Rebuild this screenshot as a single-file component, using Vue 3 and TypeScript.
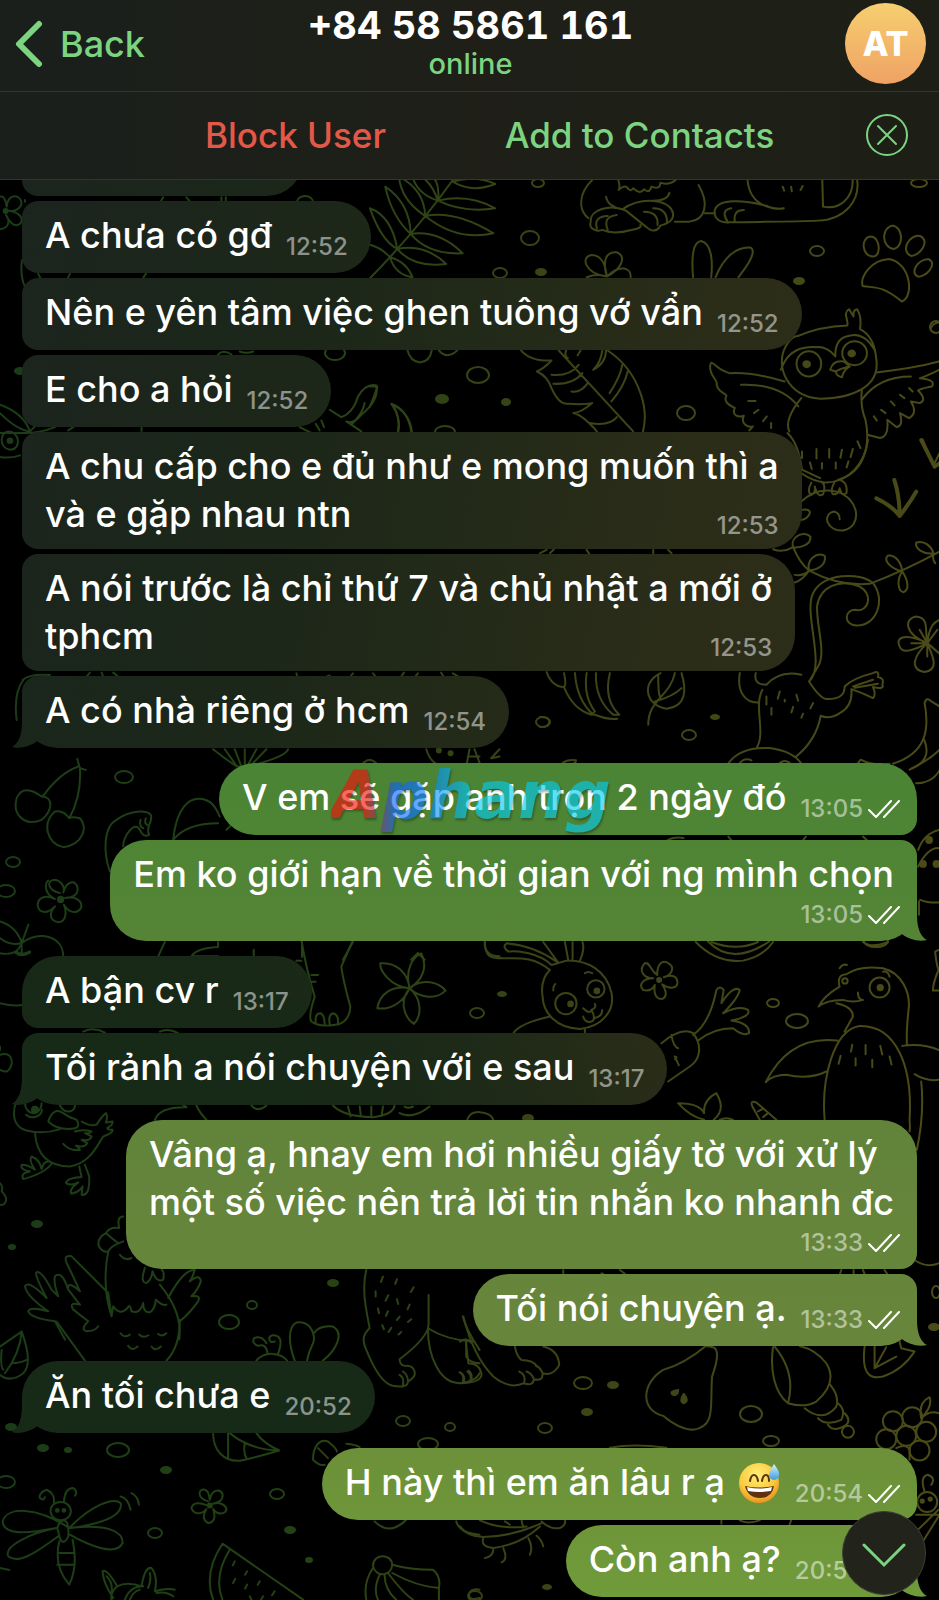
<script setup lang="ts">
interface Message {
  id: number
  lines: string[]
  time: string
  out?: boolean
  stacked?: boolean
  emoji?: boolean
}

const groups: Message[][] = [
  [
    { id: 1, lines: ['A chưa có gđ'], time: '12:52' },
    { id: 2, lines: ['Nên e yên tâm việc ghen tuông vớ vẩn'], time: '12:52' },
    { id: 3, lines: ['E cho a hỏi'], time: '12:52' },
    { id: 4, lines: ['A chu cấp cho e đủ như e mong muốn thì a', 'và e gặp nhau ntn'], time: '12:53' },
    { id: 5, lines: ['A nói trước là chỉ thứ 7 và chủ nhật a mới ở', 'tphcm'], time: '12:53' },
    { id: 6, lines: ['A có nhà riêng ở hcm'], time: '12:54' },
  ],
  [
    { id: 7, lines: ['V em sẽ gặp anh trọn 2 ngày đó'], time: '13:05', out: true },
    { id: 8, lines: ['Em ko giới hạn về thời gian với ng mình chọn'], time: '13:05', out: true, stacked: true },
  ],
  [
    { id: 9, lines: ['A bận cv r'], time: '13:17' },
    { id: 10, lines: ['Tối rảnh a nói chuyện với e sau'], time: '13:17' },
  ],
  [
    {
      id: 11,
      lines: ['Vâng ạ, hnay em hơi nhiều giấy tờ với xử lý', 'một số việc nên trả lời tin nhắn ko nhanh đc'],
      time: '13:33',
      out: true,
      stacked: true,
    },
    { id: 12, lines: ['Tối nói chuyện ạ.'], time: '13:33', out: true },
  ],
  [{ id: 13, lines: ['Ăn tối chưa e'], time: '20:52' }],
  [
    { id: 14, lines: ['H này thì em ăn lâu r ạ'], time: '20:54', out: true, emoji: true },
    { id: 15, lines: ['Còn anh ạ?'], time: '20:54', out: true },
  ],
]

// Wallpaper pebbles: [cx, cy, rx, ry]
const rings: number[][] = [
  [530, 238, 9, 7], [500, 273, 7, 5], [817, 251, 7, 5], [335, 353, 10, 7], [478, 375, 11, 8],
  [686, 413, 9, 7], [936, 327, 6, 6], [445, 432, 10, 6], [305, 202, 8, 6], [543, 722, 7, 5],
  [689, 735, 7, 5], [124, 777, 9, 6], [13, 862, 7, 5], [6, 891, 9, 6], [477, 1013, 7, 5],
  [773, 1003, 6, 4], [797, 1021, 11, 7], [876, 941, 12, 6], [252, 1305, 5, 4], [229, 1322, 10, 7],
  [403, 1421, 7, 5], [450, 1427, 5, 4], [428, 1444, 10, 6], [118, 1450, 11, 7], [6, 1482, 9, 6],
  [277, 1494, 7, 5], [155, 1533, 7, 5], [583, 1383, 9, 6], [545, 1428, 7, 5], [751, 1414, 11, 8],
  [771, 1441, 8, 5], [475, 1596, 7, 5], [936, 1292, 4, 6], [538, 183, 6, 4], [919, 183, 8, 4],
]
const dots: number[][] = [
  [541, 272, 6, 4], [799, 281, 6, 4], [442, 399, 7, 5], [506, 402, 5, 4], [715, 717, 5, 3],
  [20, 371, 6, 4], [502, 994, 5, 3], [528, 1118, 6, 4], [37, 1224, 6, 4], [12, 1247, 4, 3],
  [333, 1283, 6, 4], [11, 1427, 6, 4], [43, 1448, 6, 4], [68, 1450, 4, 3], [166, 1470, 6, 4],
  [290, 1530, 6, 4], [309, 1560, 4, 3], [613, 1385, 6, 4], [587, 1412, 6, 4], [547, 1587, 5, 3],
  [934, 1327, 6, 4],
]

const isLast = (index: number, list: unknown[]) => index === list.length - 1
</script>

<template>
  <div class="screen">
    <svg class="wallpaper" viewBox="0 0 939 1600" preserveAspectRatio="xMidYMin slice" aria-hidden="true">
      <defs>
        <linearGradient id="inkAcross" x1="0" y1="0" x2="1" y2="0">
          <stop offset="0" stop-color="#1a3c17" />
          <stop offset="0.3" stop-color="#234213" />
          <stop offset="0.6" stop-color="#3c4416" />
          <stop offset="1" stop-color="#4b4b18" />
        </linearGradient>
        <mask id="doodles" maskUnits="userSpaceOnUse" x="0" y="0" width="939" height="1600">
          <ellipse v-for="(r, i) in rings" :key="'r' + i" class="line" :cx="r[0]" :cy="r[1]" :rx="r[2]" :ry="r[3]" />
          <ellipse v-for="(d, i) in dots" :key="'d' + i" fill="#fff" :cx="d[0]" :cy="d[1]" :rx="d[2]" :ry="d[3]" />

          <!-- fern, sleeping pets, paw, feather and owl -->
          <g class="line" transform="translate(370 180) scale(.363 .333)">
            <path d="M228 0Q130 150 0 295M187 62Q125 40 115-20Q165-10 187 62ZM187 62Q195 0 160-20M187 62Q270 40 345 85Q260 100 187 62M228 5Q290-15 345 12Q280 40 228 5M152 108Q85 60 80-10Q150 30 152 108M152 108Q235 90 340 160Q240 185 152 108M112 162Q60 110 42 20Q110 70 112 162M112 162Q190 150 255 220Q160 225 112 162M75 207Q30 180 0 85Q60 110 75 207M75 207Q150 190 210 252Q120 265 75 207M55 232Q30 200-10 192M55 232Q100 245 117 292Q70 285 55 232" />
            <path d="M612 0C575 40 572 90 602 115M684 0Q690 20 685 30Q700 15 708 22Q718 38 725 25Q745 45 755 28Q770 42 775 20Q800 30 800 8Q830 20 850-10M650 50Q655 80 695 88M825 38Q820 62 780 62M695 88Q740 55 795 65C845 80 850 125 800 137Q785 165 760 140L705 92C660 70 605 90 608 125C600 150 630 155 640 150Q670 165 720 150Q750 145 745 135M655 150Q640 110 680 105M625 145Q615 110 655 108M755 95Q795 95 792 135M780 85Q820 85 818 130M905 15C935 70 925 120 880 125L840 125M922 100H950" />
            <path d="M1040 0Q1045 60 1090 78Q1120 90 1140 85M1095 78C1030 60 960 55 950 90C945 120 970 130 990 127C1120 125 1180 125 1235 122C1310 118 1350 60 1342 0M1330 0C1330 60 1290 90 1248 80L1246 0M985 125Q965 90 995 85M1005 125Q1000 90 1030 90M1137 20l4 12M1160 20l2 14M1192 18l-6 12" />
            <path d="M1380 170c25 0 30 60 5 60c-30-2-35-58-5-60M1440 137c30 5 30 65 3 70c-35-5-35-65-3-70M1515 168c30 15 0 60-25 60c-30-15-5-65 25-60M1540 238c25 15-10 55-30 52c-25-10 0-55 30-52M1430 237C1380 240 1350 290 1357 318C1390 325 1410 315 1465 365C1500 350 1490 250 1430 237" />
            <path d="M652 290C590 280 580 230 610 225C640 225 650 260 652 290C640 240 650 215 680 217C710 230 690 270 652 290C690 250 720 265 718 292M597 292Q625 280 652 290M890 292C885 230 890 185 912 183C940 190 945 240 940 292M952 292C975 230 1010 200 1048 203C1070 215 1030 270 1015 292" />
            <path d="M103 510Q110 545 138 548Q165 545 170 512M190 512Q212 540 240 512M415 510Q440 545 500 542Q480 565 460 575Q490 590 500 625Q520 675 545 672Q590 675 612 670Q580 700 560 700Q585 705 625 755M520 512L725 755M655 512Q720 560 745 640Q765 700 752 755M580 512l-8 14M540 512Q535 530 545 535M640 512Q635 550 615 570Q650 550 650 512M500 585Q550 590 575 555M505 612Q560 615 585 580M555 635Q580 640 600 610M660 640Q690 590 695 555M665 665Q700 620 710 575M605 730Q660 740 680 712M63 675Q110 700 115 755M0 680Q15 640 20 620L0 620M78 755Q85 720 63 675" />
            <path d="M1180 468Q1240 440 1315 437C1320 420 1300 400 1320 388L1332 410Q1330 390 1342 388Q1355 410 1350 448Q1390 470 1395 540C1405 620 1330 655 1240 657C1150 650 1115 560 1145 500Q1160 470 1180 468M1132 570C1150 510 1190 500 1230 502Q1260 500 1282 530Q1280 475 1320 468Q1360 455 1390 510" />
            <ellipse cx="1209" cy="552" rx="34" ry="38" /><ellipse cx="1335" cy="520" rx="34" ry="36" />
            <circle cx="1203" cy="553" r="9" fill="#fff" /><circle cx="1327" cy="521" r="9" fill="#fff" />
            <path d="M1268 570Q1275 540 1305 545L1322 560Q1305 570 1300 592Q1285 590 1283 575ZM1283 575Q1300 565 1320 560M1142 605Q1050 575 990 580C950 570 940 530 937 560C935 590 960 600 955 615C960 640 980 640 982 648C970 670 1000 680 1005 685C995 705 1015 715 1030 708C1020 730 1040 745 1055 740L1045 752M1022 615Q1130 610 1180 680M1188 655Q1140 720 1155 755M1395 578Q1500 565 1568 545M1355 660Q1400 590 1490 590M1568 570Q1530 590 1515 595Q1560 600 1548 620Q1520 625 1510 632Q1535 660 1515 670L1490 665Q1510 700 1485 715L1460 700Q1470 740 1450 742L1425 720Q1430 770 1405 775L1370 765M1355 630Q1350 680 1365 720C1380 800 1360 880 1290 900M1042 664h20M1070 690l-12 10M1093 710l-10 14M1105 730v15M1435 665l10 12M1460 645l12 10M1408 690l12 10M1388 710l8 12M1485 625l10 10" />
            <path d="M1190 815v20M1230 808v28M1265 808v26M1300 810l-4 24M1330 808l-6 24M1343 785l8 20M1212 848l5 20M1245 850v16M1283 848v18M1318 845l-5 18M1150 760Q1180 790 1190 870L1240 895M1523 780Q1540 830 1552 858L1568 822M1545 445q5-15 25-18" />
          </g>

          <!-- owl feet, vine, monkey, bananas -->
          <g class="line" transform="translate(540 440) scale(.333)">
            <path d="M785 100Q820 125 860 128C930 125 975 70 985 0M815 128Q800 155 815 165Q830 155 825 140Q835 175 850 163Q860 135 845 125M885 125Q870 155 880 163Q895 165 900 145Q905 170 920 160Q925 130 905 122M782 187Q830 140 890 155C960 175 970 260 910 272C860 275 845 220 885 215Q900 220 900 238M783 210q35-5 25 15q-10 15-25 15" />
            <path class="thick" d="M1010 175Q1060 200 1080 228Q1110 190 1130 155M1064 120Q1080 170 1080 228M1145 0L1185 80L1200 70" />
            <path d="M700 328Q730 340 760 322C750 290 795 270 812 290C815 315 780 325 760 322Q780 370 808 392C800 360 830 335 855 348C860 375 835 390 808 392Q790 410 765 405M765 428Q790 420 808 392Q900 440 990 432Q1100 390 1200 335M1088 395C1050 385 1030 360 1045 347C1070 345 1085 370 1088 395C1070 420 1075 455 1092 457C1110 450 1105 420 1088 395M1182 340C1150 345 1125 325 1130 308C1155 300 1175 320 1182 340q-5 20 5 30" />
            <path d="M808 725C860 680 790 520 820 460C850 400 960 395 1000 430C1040 480 1010 560 950 557C910 555 915 510 945 510C990 520 1000 460 960 440C900 415 840 440 832 500C830 560 860 640 835 680L808 725Q840 775 860 778Q915 780 915 740Q940 715 1000 700Q1020 690 1015 712Q1035 715 1028 735Q1035 750 1000 742Q1010 765 1000 775Q970 760 935 748Q940 800 900 820Q870 840 843 828Q830 900 770 950M940 740l60-20M945 744l70-12M785 705Q720 690 680 735Q640 735 648 700M600 700C590 760 620 790 655 788M668 750C640 800 680 880 650 925M565 972Q600 920 690 925Q760 935 785 972M600 970q15-18 35-8M720 970q15-12 30 0M680 770v24M720 755l-6 22M770 765l5 18M820 790l-8 16M695 805v20M760 802l-5 16M790 822l-5 12M735 780v5" />
            <path d="M20 697Q35 740 72 742Q80 735 72 700M105 700Q110 780 160 825M72 742Q100 810 155 825L165 815Q130 770 140 700M168 700Q165 780 220 825L238 825Q190 780 210 700M165 825Q200 840 232 837M0 832q30 0 28 16q-5 16-28 14M0 340l20-10M30 340l12-12M340 330v12M385 330l10 10M140 330l8 12" />
            <path d="M325 855C325 780 390 770 405 700M362 700C300 730 320 800 380 807C440 800 440 750 425 700M355 705Q355 760 360 770M345 785Q400 770 425 745" />
            <path d="M1163 610Q1090 650 1080 620C1065 590 1100 580 1163 610C1090 580 1095 535 1130 530C1170 535 1155 570 1163 610C1170 550 1190 545 1200 540M1163 610C1120 650 1110 690 1155 697C1200 690 1180 650 1163 610L1140 570M1163 610H1115M1163 610V650M1163 610l30-40M1163 610l35 30" />
            <path d="M1155 790C1170 870 1160 940 1060 972M1155 790Q1160 770 1175 785L1200 800M1110 990Q1170 960 1200 930M955 970l8-10Q1000 980 1050 972M68 970q15-12 40-8q0 10-10 10" />
          </g>

          <!-- cherries, swan, flower, apple -->
          <g class="line" transform="translate(0 660) scale(.333)">
            <path d="M125 410Q70 370 50 415C35 470 80 500 125 480C160 450 160 410 125 410L132 405Q180 340 235 320M232 297L240 325L258 330M240 325Q245 410 208 475Q190 450 165 455C125 490 140 550 190 562C250 555 265 500 240 475Q215 470 208 475" />
            <path d="M330 635C310 580 310 500 350 480C390 450 440 450 453 465C460 490 435 500 448 525Q430 535 420 510C405 480 370 530 370 560M422 480q-5 20 8 25M438 475q-6 15 4 20M520 540C530 440 570 415 600 417C640 420 650 450 660 470M520 540Q560 490 655 490M680 510l15-15" />
            <path d="M180 700C140 690 140 660 165 660C190 665 195 690 190 698C200 660 230 660 233 685C235 710 210 715 195 715C225 705 250 725 243 745C225 770 200 750 192 735C205 770 190 790 172 787C145 780 150 755 165 740C140 765 115 760 113 735C115 710 140 705 165 718C130 700 135 670 145 662" />
            <circle cx="182" cy="719" r="8" fill="#fff" />
            <path d="M0 785Q50 800 65 850Q30 860 0 835M65 850L85 795M65 850C120 810 190 830 190 890M65 850V880M50 875q10 15 40 0M475 890L495 847M575 890Q590 865 655 862V847M575 890h80M762 870v30M907 847v45M1030 900L1060 847M1235 900l20-20l20 20M1455 847Q1455 890 1500 890" />
            <path d="M640 268Q680 300 712 320M675 268L712 320M705 268L725 320M735 268V320M770 268L742 320M800 268L750 320M715 320h30Q860 290 865 268M1280 268Q1290 300 1310 312M1410 268l-8 42M1405 290h35M1425 268l15 40M1500 290l-25 5L1500 268M50 180Q40 100 70 60M1090 310q20-20 40 0M68 60Q90 40 150 45M260 50l10-12M310 50l-5-12M355 50l-15-12M890 40l5 14M975 52l15-6M1060 40l-10 12M1120 40l10 12M1205 50l8-12M1255 40l-10 12M1325 38l8 14M1360 40l20 12" />
            <circle cx="1353" cy="280" r="6" fill="#fff" /><circle cx="1318" cy="272" r="6" fill="#fff" />
          </g>

          <!-- elephant foot, plumeria, duckling, owl -->
          <g class="line" transform="translate(0 940) scale(.333)">
            <path d="M905 0Q920 90 945 170Q925 230 935 245Q960 265 1020 252Q1050 240 1052 200Q1030 120 1025 80L1060 0M948 250Q945 220 962 220Q975 225 975 252M990 252Q985 225 1000 220Q1018 225 1015 250M935 105h20M930 125h18M890 62h15" />
            <path d="M1230 145C1170 140 1140 90 1142 70C1190 65 1225 100 1230 145C1215 90 1240 50 1265 40C1285 80 1270 120 1230 145C1270 110 1320 130 1338 152C1310 180 1260 175 1230 145C1270 180 1265 230 1243 252C1210 230 1200 180 1230 145C1210 190 1170 210 1133 205C1140 160 1180 135 1230 145" />
            <path d="M75 455C30 490 30 560 80 572Q130 585 180 568M75 490a25 30 0 1 0 50 0M78 525a28 24 0 0 0 48-15M145 545Q160 500 190 520Q210 535 230 540Q245 565 215 567Q170 570 145 545M180 497q10 20 30 18q15-5 15-18M105 580C110 640 140 680 210 680C270 670 290 620 310 590Q340 580 338 570Q325 570 322 565Q340 555 338 545L318 548Q325 530 318 520Q305 530 290 555Q270 560 245 545M190 612Q210 635 240 630Q235 620 228 618Q255 625 262 610L245 600Q270 605 275 590L255 580Q270 582 275 575Q250 568 225 575M155 672Q135 700 70 718Q60 700 90 695Q60 690 65 675Q85 675 105 690Q85 660 95 650Q120 660 125 688Q130 665 145 665M238 680L245 712Q200 715 198 730Q215 740 235 728Q205 750 215 762Q240 755 248 740L245 765Q270 770 268 710L255 675" />
            <circle cx="105" cy="510" r="9" fill="#fff" />
            <path d="M465 540Q480 500 560 502L550 495M590 497Q600 520 620 540M755 497q20 22 45 0M1000 497Q1030 530 1120 532Q1180 525 1185 497M1045 500l8 30M1080 500l4 30M1115 500v30M1150 500l-4 28M1200 520Q1240 540 1290 500M1215 500q10 8 25 0M0 190Q40 200 65 195M0 40Q60 50 65 0M45 38q20 15 45 0M0 320v10M0 345C40 330 45 380 20 395Q10 395 0 390M0 730q10 10 5 25q20 20 10 35q-5 8-15 5M250 275Q280 260 315 278M480 275q25-12 55 5" />
            <path d="M370 830Q350 830 358 865Q330 860 318 880Q340 900 355 910M318 880Q290 895 297 920Q310 940 325 935Q330 920 370 905M325 935Q305 1040 335 1130L340 1100Q360 1130 383 1105Q390 1090 395 1115Q420 1125 430 1090Q430 1120 450 1118Q465 1110 468 1080Q490 1100 500 1095M360 945q15 20 35 10M435 985Q420 1030 440 1030Q455 1020 458 995Q470 1030 490 1020Q495 1000 485 988M335 1130L325 1060L215 950Q190 945 200 970Q220 1010 240 1055Q200 1020 205 1050L240 1095Q205 1085 220 1110L265 1145Q240 1170 260 1175Q285 1175 295 1160M165 1145Q90 1135 85 1115Q90 1100 145 1115Q80 1070 75 1040Q85 1020 140 1075Q110 1020 108 1000Q120 985 155 1050L175 1070Q160 1030 165 1010Q185 990 205 1050M165 1145L195 1200M480 1035Q550 1120 538 1200M505 1075Q550 990 585 990Q580 1010 570 1025Q600 1000 603 1025Q595 1050 575 1070Q605 1065 595 1085Q570 1120 540 1145" />
          </g>

          <!-- rabbit, flower, carrot, penguin -->
          <g class="line" transform="translate(460 920) scale(.333)">
            <path d="M75 66C75 110 90 115 130 115C180 115 220 110 270 150Q240 180 248 230C250 280 290 325 360 327C430 320 465 270 455 220C440 150 380 120 320 122L275 135C240 100 170 90 145 95Q125 80 140 70Q220 75 295 128L250 66M325 120L315 66M338 118V66M360 122Q375 90 368 66M270 290Q180 310 160 340M375 328v12M375 160q10-8 22 0M280 212q0-15 6-20" />
            <circle cx="318" cy="251" r="32" /><circle cx="408" cy="207" r="26" />
            <circle cx="332" cy="252" r="7" fill="#fff" /><circle cx="411" cy="213" r="7" fill="#fff" />
            <path d="M370 265Q390 285 395 270Q410 265 405 252M395 270Q410 300 395 305Q375 310 370 290M402 295q25-5 25-25M708 66Q770 130 850 122Q910 110 940 66M755 66Q830 95 895 66M1210 66q25 20 75 0" />
            <path d="M592 165C570 150 570 125 555 130C535 150 550 175 580 175C550 175 535 195 550 210C570 215 580 205 585 195C580 230 595 240 610 236C625 225 615 205 607 193C630 210 655 205 653 185C650 165 630 165 612 172C635 165 645 145 630 133C610 115 592 130 592 165" />
            <circle cx="598" cy="180" r="6" fill="#fff" />
            <path d="M605 370Q665 320 700 340C730 380 720 420 690 440L625 485M700 345Q750 310 770 210Q780 195 792 210L785 250Q820 195 840 210Q835 235 790 280Q840 255 865 270Q875 290 815 302Q870 310 868 340Q850 350 820 325Q760 325 715 362M635 345Q640 380 655 385M645 410l12 26M650 412l-4 6" />
            <path d="M1140 200Q1130 165 1160 163Q1200 135 1270 145C1330 160 1350 220 1348 260Q1340 330 1342 372M1140 200Q1090 230 1077 260Q1100 240 1150 240Q1180 250 1210 240M1195 218Q1195 240 1210 240M1130 250Q1180 260 1180 290L1155 335M1140 145q10-15 22-10M1270 155q15-3 20 15M1095 600C1085 480 1120 330 1200 318C1310 315 1360 440 1350 600M1133 362Q990 345 918 487Q940 465 980 465Q1050 480 1100 455M1328 378Q1390 370 1437 390M1365 463Q1400 485 1437 480M1385 485Q1395 580 1372 690M1350 600Q1352 620 1350 635M1178 375l-4 20M1218 375v28M1262 378l6 26M1143 408l-6 24M1188 415v22M1238 420v22M1290 410l6 24M1437 90l-10 5Q1430 130 1437 150Q1420 190 1420 212H1437" />
            <circle cx="1260" cy="203" r="30" /><circle cx="1262" cy="203" r="8" fill="#fff" /><circle cx="1156" cy="183" r="8" />
            <path d="M733 600Q690 590 655 550Q720 550 733 580Q730 540 770 520Q800 570 762 600M780 600q20-10 40 0M878 560Q870 540 890 548L950 600M878 560L900 600M895 575l15-8M910 592l15-12M22 600Q30 575 60 577Q95 580 100 600" />
          </g>

          <!-- leaf, bee, bear, dragonfly, melon, shell -->
          <g class="line" transform="translate(0 1240) scale(.333)">
            <path d="M65 275Q100 370 70 400Q30 430 0 405M65 275L0 320M65 275Q60 340 15 400M5 330Q0 380 10 390M35 370Q60 370 80 360M170 245L255 362M540 240Q540 320 500 362M362 280q10 16 28 4M418 284q12 12 28 2M475 282q12 10 24-2M385 318q12 18 28 2M455 320q12 16 28 0" />
            <path d="M770 362Q790 340 820 342Q850 345 862 362M803 340Q800 310 775 318Q755 310 763 295Q785 285 800 310M835 342Q850 300 835 290Q815 280 808 295Q810 310 825 305M885 362C865 310 865 260 890 248C935 240 950 290 940 310C930 330 925 345 922 362M942 280Q960 255 1000 260C1035 280 1010 330 970 362" />
            <path d="M1100 90C1085 150 1100 210 1110 265Q1080 290 1100 330Q1140 430 1180 438Q1225 445 1225 425Q1250 410 1245 395Q1240 375 1215 378Q1200 375 1200 358Q1290 290 1287 250V165M1210 435q5-20-10-30M1225 425q0-20-15-30M1285 265Q1340 300 1420 305M1285 265C1285 350 1320 430 1380 430Q1430 425 1440 400M1390 230Q1400 270 1440 330M1400 305V350Q1410 370 1440 370M1390 425q5-20-10-28M1415 422q5-20-8-30M1150 110l-6 16M1192 118l-5 14M1242 142l-8 14M1128 154v16M1166 166l-8 16M1192 178l4 14M1230 194l-6 14M1135 206l3 14M1165 214l-6 14M1200 230l-8 10M1235 238l-10 8M1148 256l5 12M1175 264l-8 12M1205 276l-8 8" />
            <path d="M640 580C640 630 670 665 720 663Q780 650 838 632Q790 610 770 580M685 580V655M690 580Q750 630 838 632M735 610Q730 640 740 655M1040 612Q1070 615 1080 622M940 660C940 620 960 595 985 605Q1010 625 1012 635M940 660Q960 680 975 675M955 625L985 655" />
            <path d="M208 865C110 800 20 800 8 845C10 890 90 880 170 865C90 880 10 920 25 950C60 980 130 920 175 890M208 865C270 800 340 770 362 790C370 820 330 850 210 865C330 850 370 880 368 910C350 950 270 920 210 885M152 815C150 780 210 775 213 815C210 850 155 850 152 815ZM172 865Q180 840 195 843Q208 850 205 890Q190 920 180 895ZM178 905Q160 980 208 1035Q235 980 218 900M175 940h45M172 975h50M162 790Q165 760 140 750Q115 760 120 775Q130 785 135 772M192 785Q195 745 220 745Q235 755 225 768M362 770Q385 775 392 810M395 760Q415 770 417 795M0 985l28 6" />
            <circle cx="172" cy="812" r="4" fill="#fff" /><circle cx="192" cy="812" r="4" fill="#fff" />
            <path d="M625 785C590 775 595 745 615 750C630 755 628 775 630 780C635 750 660 745 668 762C672 785 650 788 640 792C665 785 685 800 678 815C660 830 645 815 640 808C650 835 640 850 625 850C605 840 612 820 620 808C600 830 580 820 575 805C580 785 605 790 620 796" />
            <circle cx="630" cy="797" r="6" fill="#fff" />
            <path d="M340 1075Q310 1030 308 995Q320 985 352 1040Q380 1025 425 1040Q435 980 455 985Q475 1010 465 1055Q500 1045 525 1050M352 1040Q330 1060 335 1080M375 1080Q390 1040 430 1040M390 1080q10-25 30-30M470 1060q30-5 50 10M320 1010q20 20 15 50M450 1000q5 20-5 45" />
            <path d="M668 912Q610 1000 640 1080M668 912L910 1080M690 930Q640 1010 668 1080M705 965l-6 12M742 995l-6 10M780 1025l-6 10M825 1055l-8 12M706 1018l-6 12M742 1035l-6 12M790 1070l-6 10M750 1070l5 10" />
            <path d="M1120 980C1120 940 1175 940 1178 975C1175 1010 1130 1015 1120 980ZM1120 985Q1090 1030 1100 1080M1140 1005Q1120 1050 1135 1080M1155 1005Q1155 1050 1190 1080M1165 1000Q1210 1060 1240 1080M1178 975Q1230 990 1300 990Q1325 1010 1318 1045Q1250 1040 1178 1000M1318 1045V1080M1125 845Q1170 890 1220 840M1370 845Q1380 880 1440 885M1440 1075q-30 10-32-10q5-20 32-15" />
          </g>

          <!-- pear, cone shell, berries, beetle, bee -->
          <g class="line" transform="translate(460 1260) scale(.333)">
            <path d="M0 245Q20 230 35 250M10 170Q40 290 100 350Q150 390 192 370Q200 345 178 335M192 370Q220 380 222 358Q215 340 200 335M222 358Q250 365 248 340Q240 320 228 318M248 340Q280 350 298 315Q295 270 250 260M165 260Q170 290 185 300Q220 300 232 320M0 370Q60 370 65 345Q60 310 25 310L18 250M30 365q8-18-8-30M10 368q8-18-8-30" />
            <path d="M738 258C700 290 660 315 610 330C545 370 540 450 610 468Q660 510 700 510C770 500 750 440 757 350Q785 270 760 262ZM940 262C930 330 945 400 985 430Q1010 340 945 260M985 430Q1035 445 1070 425C1110 390 1125 350 1100 310Q1070 270 1020 258M1112 375Q1140 410 1130 440Q1090 490 1035 445M1135 430Q1160 450 1145 480Q1100 500 1075 475M1155 460Q1175 480 1160 495Q1120 520 1105 495" />
            <circle cx="1165" cy="516" r="18" />
            <path d="M640 405q-15-10 15-15q0 18-15 15M672 430q-15-5 0-28q18 22 0 28" fill="#fff" />
            <path d="M1215 260C1205 340 1230 360 1270 350Q1330 330 1365 275L1325 265L1320 245M1245 260V325L1310 290M1245 325L1280 262M1365 0Q1400 25 1437 10M1145 30l-4 12M1182 30v12M1210 30l5 12M1275 30l8 12M310 30v12M480 30l16 12M425 40l5 2" />
            <circle cx="1300" cy="484" r="30" /><circle cx="1358" cy="472" r="30" /><circle cx="1280" cy="538" r="30" /><circle cx="1340" cy="528" r="30" /><circle cx="1400" cy="516" r="30" /><circle cx="1380" cy="572" r="30" />
            <path d="M1385 475Q1375 430 1410 412Q1420 440 1385 475Q1410 450 1437 460M1310 565q30-15 40 5v30M450 564Q520 550 620 564" />
            <path d="M0 800Q20 830 70 832Q160 830 245 790M70 835Q60 860 100 865Q180 855 240 800M60 782Q120 810 200 800M185 782l5 22M245 785Q270 810 300 805Q320 795 315 780M75 895Q100 890 100 868M125 908Q145 900 130 865M210 885Q220 860 205 835M250 860Q245 840 230 828M135 785l15 10M785 780v12M995 780l-5 14M840 782q25 12 60 0" />
            <circle cx="1403" cy="727" r="30" /><circle cx="1388" cy="724" r="5" fill="#fff" /><circle cx="1412" cy="718" r="5" fill="#fff" />
            <path d="M1395 695Q1380 650 1405 645Q1430 655 1415 675M1370 765H1437M1370 815L1437 750M1390 845L1437 770" />
          </g>

          <!-- left edge flowers and butterflies -->
          <g class="line" transform="translate(0 180) scale(.333)">
            <path d="M20 80Q15 45 0 50M20 80C25 40 60 40 65 70C60 90 40 95 25 92C55 95 75 115 60 132C40 145 25 120 18 105C35 130 20 145 0 148" />
            <circle cx="17" cy="93" r="6" fill="#fff" />
            <path d="M75 60v5M490 52l-6 10M560 52l8 10M665 52v10M678 52v10M66 240Q60 290 75 320M115 282l6 12M210 282l-6 12M438 282l-8 12M655 524q15-16 40 0M720 515q20 8 40 0M0 675Q70 700 90 755Q50 750 0 700M0 760H75Q120 760 165 742M90 755q40-40 70-70M25 755C60 755 65 810 30 810C-5 805 0 755 25 755M0 832q30 5 60-5M425 742v12M220 742l-15 10" />
            <circle cx="30" cy="783" r="7" fill="#fff" />
            <path d="M900 742L1085 835M990 690L1025 712Q1060 700 1075 650Q1100 610 1130 617Q1140 660 1085 705Q1060 735 1040 725L1085 755M1095 670Q1090 700 1055 735M948 732l12 20M965 722l8 20M1175 672Q1225 690 1235 755M1175 672Q1205 710 1195 755" />
          </g>

          <!-- penguin behind the right edge -->
          <g class="line" transform="translate(300 740) scale(.408 .333)">
            <path d="M1515 330Q1530 280 1568 270M1515 380Q1540 320 1568 325M1520 480Q1540 490 1568 488M1517 485v40M1380 290l10 12M1050 290l8 12M1240 290l-8 12M900 302q15-12 40-8M1000 605Q1060 680 1150 605M1530 0Q1550 60 1500 85M1568 90Q1550 130 1510 130" />
            <ellipse cx="1542" cy="300" rx="7" ry="9" fill="#fff" /><ellipse cx="1527" cy="372" rx="7" ry="9" fill="#fff" /><ellipse cx="1560" cy="372" rx="7" ry="9" fill="#fff" />
          </g>
        </mask>
      </defs>
      <rect width="939" height="1600" fill="url(#inkAcross)" mask="url(#doodles)" />
    </svg>

    <header class="top">
      <div class="nav">
        <a class="back" href="#chats">
          <svg width="28" height="48" viewBox="0 0 28 48" aria-hidden="true"><path d="M24 4L4 24l20 20" /></svg>
          <span>Back</span>
        </a>
        <div class="peer">
          <h1>+84 58 5861 161</h1>
          <p>online</p>
        </div>
        <a class="avatar" href="#profile" aria-label="Profile">AT</a>
      </div>
      <div class="actions">
        <button class="block" type="button">Block User</button>
        <button class="add" type="button">Add to Contacts</button>
        <button class="close" type="button" aria-label="Close">
          <svg width="44" height="44" viewBox="0 0 44 44" aria-hidden="true">
            <circle cx="22" cy="22" r="20" />
            <path d="M13 13l18 18M31 13L13 31" />
          </svg>
        </button>
      </div>
    </header>

    <main class="chat">
      <div class="bubble in earlier" aria-hidden="true"></div>
      <section v-for="(group, g) in groups" :key="g" class="group" :class="{ continued: g === 0 }">
        <article
          v-for="(m, i) in group"
          :key="m.id"
          class="bubble"
          :class="{
            in: !m.out,
            out: m.out,
            stacked: m.stacked,
            multi: m.lines.length > 1 && !m.stacked,
            first: i === 0 && g > 0,
            last: isLast(i, group),
          }"
        >
          <div v-for="(line, l) in m.lines" :key="l" class="row">
            <span class="text">{{ line }}</span>
            <svg v-if="m.emoji" class="emoji" viewBox="0 0 42 42" role="img" aria-label="😅">
              <defs>
                <radialGradient id="face" cx="0.45" cy="0.3" r="0.75">
                  <stop offset="0" stop-color="#fff07a" />
                  <stop offset="0.6" stop-color="#fbc93c" />
                  <stop offset="1" stop-color="#e58a1c" />
                </radialGradient>
                <linearGradient id="sweat" x1="0" y1="0" x2="0" y2="1">
                  <stop offset="0" stop-color="#d8f3ff" />
                  <stop offset="1" stop-color="#3b9de0" />
                </linearGradient>
              </defs>
              <circle cx="20" cy="22" r="20" fill="url(#face)" />
              <path d="M11 20q1-6 4-6t4 6M23 20q1-6 4-6t3 6" fill="none" stroke="#5b3410" stroke-width="2" stroke-linecap="round" />
              <path d="M6 25q14 3 29 0q-2 12-14 12T6 25z" fill="#5f2f12" />
              <path d="M8 26q13 3 25 0l-1 4q-12 2-23 0z" fill="#fff" />
              <path d="M35 3q6 8 5 11a5 5 0 0 1-10 0q0-3 5-11z" fill="url(#sweat)" />
            </svg>
            <span v-if="isLast(l, m.lines)" class="meta">
              <time>{{ m.time }}</time>
              <svg v-if="m.out" class="ticks" viewBox="0 0 32 18" role="img" aria-label="Read">
                <path d="M1 10l7 7L23 1M16 17L31 1" />
              </svg>
            </span>
          </div>
          <i v-if="isLast(i, group)" class="tail"></i>
          <span v-if="m.id === 7" class="watermark">Aphang</span>
        </article>
      </section>
    </main>

    <button class="down" type="button" aria-label="Scroll to latest">
      <svg width="44" height="26" viewBox="0 0 44 26" aria-hidden="true"><path d="M2 2l20 20L42 2" /></svg>
    </button>
  </div>
</template>

<style>
html,
body {
  background: #000;
}
</style>

<style scoped>
.screen {
  position: relative;
  display: flex;
  flex-direction: column;
  min-height: 100vh;
  overflow: hidden;
  background: #000;
  color: #fff;
  font-family: Inter, 'Noto Sans', 'Liberation Sans', sans-serif;
  font-size: 36px;
  font-weight: 500;
  line-height: 48px;
}

.wallpaper {
  position: absolute;
  inset: 0;
  width: 100%;
  height: 100%;
}

.line {
  fill: none;
  stroke: #fff;
  stroke-width: 2px;
  stroke-linecap: round;
  stroke-linejoin: round;
}

.line .thick {
  stroke-width: 4px;
}

.line path,
.line circle,
.line ellipse {
  vector-effect: non-scaling-stroke;
}

.top {
  position: relative;
  z-index: 1;
  background: linear-gradient(90deg, #1a1f1c, #1f1f18 50%, #1d1f17);
}

.nav {
  display: grid;
  grid-template-columns: 1fr auto 1fr;
  align-items: center;
  box-sizing: border-box;
  height: 92px;
  padding: 0 13px 4px 15px;
  border-bottom: 1px solid #33352f;
}

.back {
  display: flex;
  align-items: center;
  gap: 17px;
  color: #7cd481;
  text-decoration: none;
}

svg path,
svg circle {
  stroke-linecap: round;
}

.back svg {
  fill: none;
  stroke: currentColor;
  stroke-width: 6px;
  stroke-linejoin: round;
}

.peer {
  text-align: center;
}

.peer h1 {
  margin: 0;
  font-size: 38px;
  font-variant-numeric: tabular-nums;
  font-weight: 700;
  line-height: 40px;
}

.peer p {
  margin: 0;
  color: #7cd481;
  font-size: 29px;
  font-weight: 500;
  line-height: 38px;
}

.avatar {
  display: grid;
  justify-self: end;
  place-items: center;
  width: 81px;
  height: 81px;
  border-radius: 50%;
  background: linear-gradient(#f6cf70, #efa264);
  color: #fff;
  font-size: 34px;
  font-weight: 800;
  text-decoration: none;
}

.actions {
  display: grid;
  grid-template-columns: 118fr 355fr 333fr 133fr;
  align-items: center;
  box-sizing: border-box;
  height: 88px;
  padding-bottom: 2px;
  border-bottom: 1px solid #33352f;
}

.actions button {
  padding: 0;
  border: 0;
  background: none;
  font: inherit;
  font-size: 35px;
  color: #7cd481;
  white-space: nowrap;
}

.actions .block {
  grid-column: 2;
  color: #e45848;
}

.close {
  display: flex;
  justify-self: end;
  margin-right: 30px;
}

.close svg {
  fill: none;
  stroke: currentColor;
  stroke-width: 2px;
}

.chat {
  position: relative;
  flex: 1;
  display: flex;
  flex-direction: column;
  gap: 15px;
  margin-top: -56px;
  padding: 0 22px 3px;
}

.group {
  display: flex;
  flex-direction: column;
  gap: 5px;
}

.group.continued {
  margin-top: -10px;
}

.bubble {
  position: relative;
  isolation: isolate;
  box-sizing: border-box;
  padding: 10px 23px 14px;
  min-height: 72px;
  border-radius: 36px;
  white-space: nowrap;
}

.in {
  align-self: flex-start;
  border-top-left-radius: 16px;
  border-bottom-left-radius: 16px;
}

.in,
.in .tail {
  background:
    radial-gradient(ellipse 75% 50% at 10% 90%, #172917 50%, transparent) fixed,
    linear-gradient(100deg, #1b241f, #1c2719 30%, #2b2d18 65%, #2f2f18) fixed;
}

.out {
  align-self: flex-end;
  border-top-right-radius: 16px;
  border-bottom-right-radius: 16px;
}

.out,
.out .tail {
  background: linear-gradient(#34822f, #4a8434 48%, #568437 59%, #61843a 70%, #68863b 84%, #6c9139 91%, #709b3a) fixed;
}

.in.first {
  border-top-left-radius: 36px;
}

.out.first {
  border-top-right-radius: 36px;
}

.in.last {
  border-bottom-left-radius: 36px;
}

.out.last {
  border-bottom-right-radius: 36px;
}

.earlier {
  width: 281px;
}

.multi {
  padding-bottom: 11px;
}

.row {
  display: flex;
}

.emoji {
  flex: none;
  align-self: center;
  width: 42px;
  height: 42px;
  margin-left: 14px;
}

.meta {
  display: flex;
  align-self: flex-end;
  align-items: center;
  gap: 5px;
  margin-left: auto;
  padding-left: 14px;
  color: rgba(255, 255, 255, 0.5);
  font-size: 24px;
  font-weight: 500;
  line-height: 25px;
}

.out .meta {
  margin-right: -6px;
}

.stacked .row:last-of-type {
  flex-direction: column;
}

.stacked .meta {
  margin-top: 4px;
}

.ticks {
  width: 32px;
  height: 18px;
  fill: none;
  stroke: #fff;
  stroke-width: 2px;
  stroke-linejoin: round;
}

.tail {
  position: absolute;
  z-index: -1;
  bottom: 0;
  width: 40px;
  height: 36px;
}

.in .tail {
  left: -10px;
  clip-path: path('M10 0V10C10 24 6 32 0 35C9 37 19 34 25 29L36 18V0Z');
}

.out .tail {
  right: -10px;
  clip-path: path('M30 0V10C30 24 34 32 40 35C31 37 21 34 15 29L4 18V0Z');
}

.watermark {
  position: absolute;
  top: -5px;
  left: 112px;
  background: linear-gradient(90deg, #f60d08 12%, #0861ff 23%, #0878ff 33%, #03cdf1 50%);
  background-clip: text;
  color: transparent;
  filter: drop-shadow(1px 2px 1px rgba(0, 0, 0, 0.5));
  font-family: 'DejaVu Sans', sans-serif;
  font-size: 65px;
  font-style: italic;
  font-weight: 700;
  line-height: 76px;
  opacity: 0.62;
  pointer-events: none;
}

.down {
  position: absolute;
  right: 13px;
  bottom: 5px;
  display: grid;
  place-items: center;
  width: 84px;
  height: 84px;
  padding: 5px 0 0;
  border: 1px solid #3c3d33;
  border-radius: 50%;
  background: #22231a;
  color: #7cd481;
}

.down svg {
  fill: none;
  stroke: currentColor;
  stroke-width: 3px;
}
</style>
